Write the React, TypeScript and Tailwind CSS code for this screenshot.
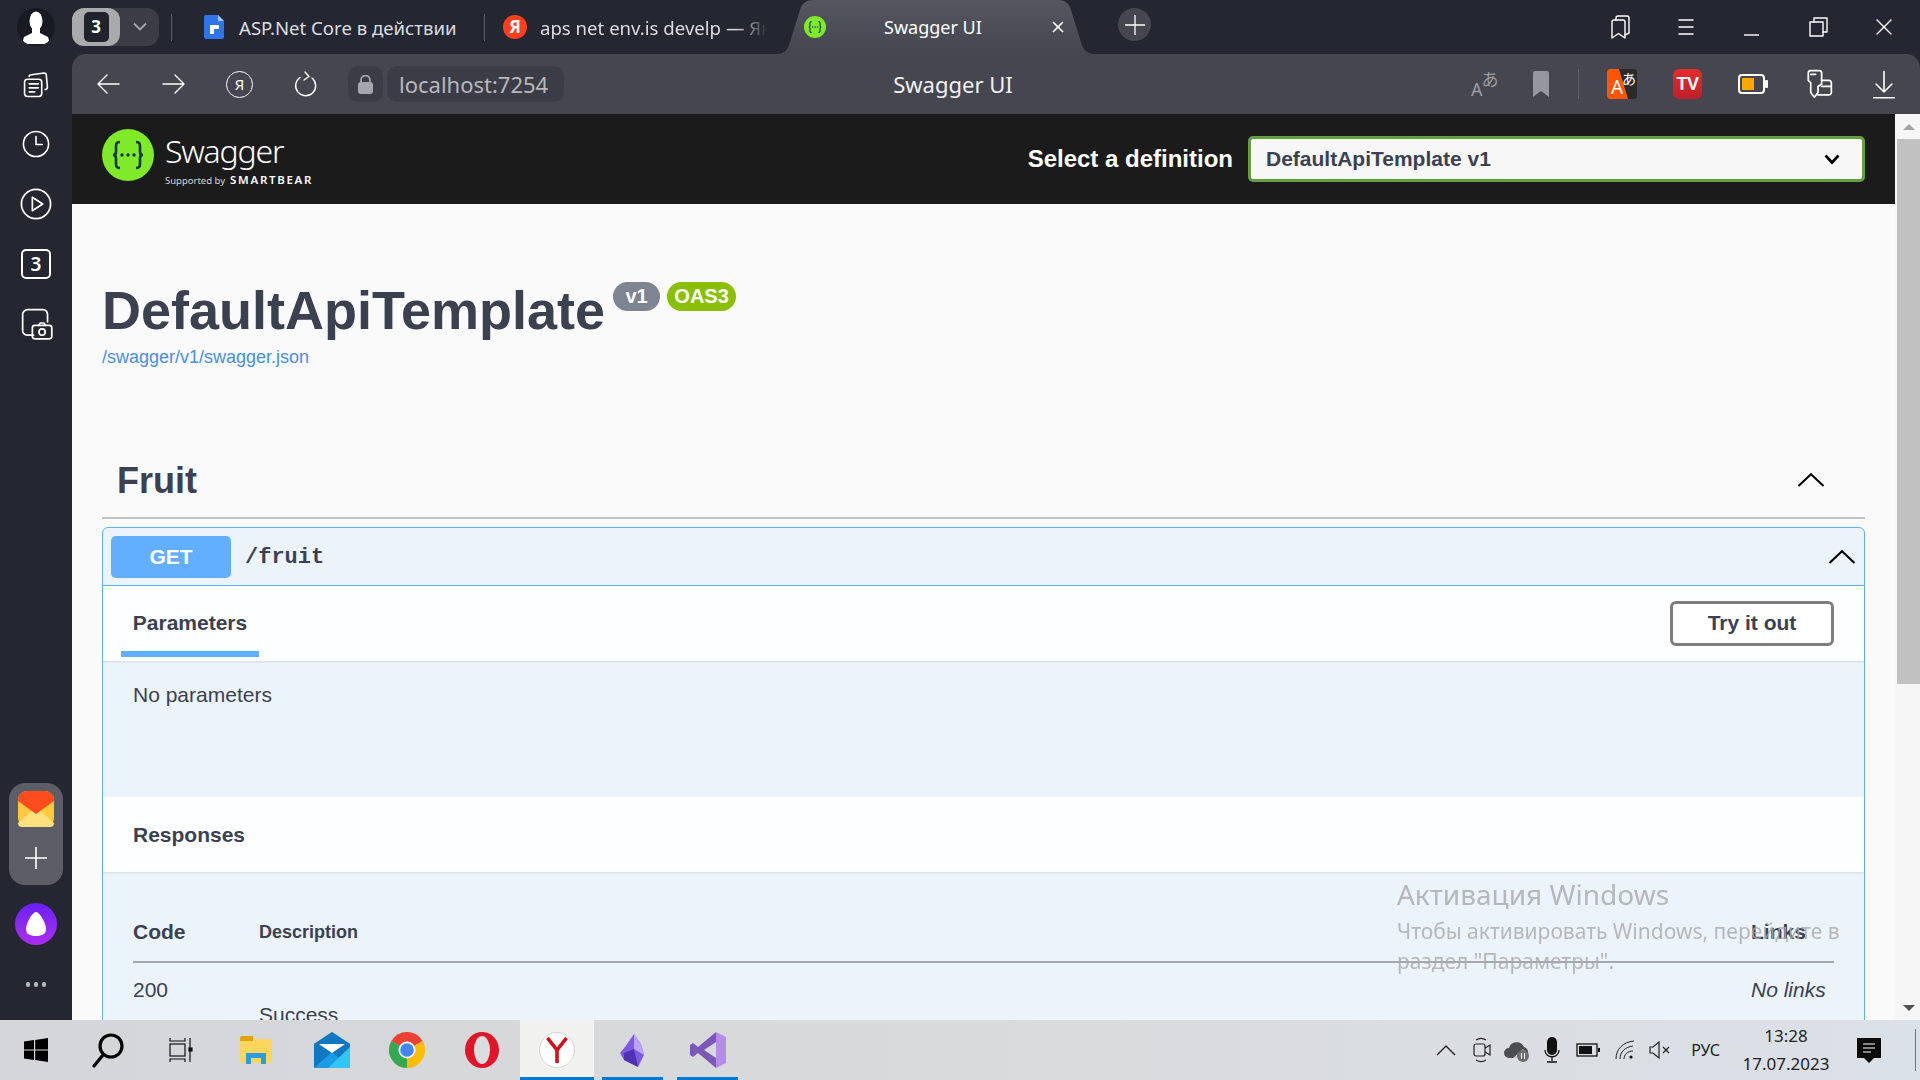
import type { ReactNode } from "react";

const ui = "font-['Noto_Sans','Open_Sans',sans-serif]";

function Icon({ size = 28, children, className = "" }: { size?: number; children: ReactNode; className?: string }) {
  return (
    <svg
      width={size}
      height={size}
      viewBox="0 0 28 28"
      fill="none"
      stroke="currentColor"
      strokeWidth="1.4"
      strokeLinecap="round"
      strokeLinejoin="round"
      className={className}
    >
      {children}
    </svg>
  );
}

function SwaggerMark({ size }: { size: number }) {
  return (
    <svg width={size} height={size} viewBox="0 0 52 52" className="shrink-0">
      <circle cx="26" cy="26" r="26" fill="#7eea2a" />
      <path
        d="M18 13c-4 0-4 2-4 5v5c0 2-1 3-3 3 2 0 3 1 3 3v5c0 3 0 5 4 5M34 13c4 0 4 2 4 5v5c0 2 1 3 3 3-2 0-3 1-3 3v5c0 3 0 5-4 5"
        fill="none"
        stroke="#173647"
        strokeWidth="2.6"
      />
      <circle cx="20" cy="26" r="1.7" fill="#173647" />
      <circle cx="26" cy="26" r="1.7" fill="#173647" />
      <circle cx="32" cy="26" r="1.7" fill="#173647" />
    </svg>
  );
}

function Rail() {
  return (
    <aside className="w-[72px] shrink-0 bg-[#242731] flex flex-col items-center text-white">
      <div className="mt-[8px] w-[38px] h-[38px] rounded-full bg-[#171a22] overflow-hidden flex justify-center">
        <svg width="30" height="38" viewBox="0 0 30 38">
          <ellipse cx="15" cy="13" rx="6.500" ry="9.500" fill="#fff" />
          <path d="M11 20h8v5l8 4c1 2 1 5 1 7H2c0-2 0-5 1-7l8-4z" fill="#fff" />
        </svg>
      </div>
      <Icon size={32} className="mt-[23px]">
        <rect x="4" y="9" width="15" height="15" rx="2.5" />
        <path d="M8 6.500C8 5 9 5 10 5l11-1.500c1 0 2 .5 2 2M23 5l1 11c0 1-1 2-2 2M8 13h8M8 16.500h8M8 20h5" />
      </Icon>
      <Icon size={32} className="mt-[27px]">
        <circle cx="14" cy="14" r="11" />
        <path d="M14 7.500v7h5.500" />
      </Icon>
      <Icon size={34} className="mt-[27px]">
        <circle cx="14" cy="14" r="12" />
        <path d="M11 8.500v11l8.500-5.500z" />
      </Icon>
      <div className="mt-[28px] w-[30px] h-[30px] rounded-[5px] border-2 border-white flex items-center justify-center text-[19px] font-semibold">
        3
      </div>
      <Icon size={34} className="mt-[27px]">
        <path d="M12 24H6.500C5 24 3 22.500 3 20.500V7c0-2 2-4 4-4h13c2 0 3.500 2 3.500 4v6" />
        <rect x="11" y="16" width="16" height="11" rx="2" />
        <path d="M16 16l1.500-2h3l1.500 2" />
        <circle cx="19" cy="21.500" r="2.600" />
      </Icon>
      <div className="mt-auto w-[54px] h-[102px] rounded-[16px] bg-[#5c5d66] flex flex-col items-center pt-[8px]">
        <svg width="36" height="36" viewBox="0 0 36 36">
          <rect width="36" height="36" rx="9" fill="#ffc93c" />
          <path d="M0 32l18-16 18 16v0a4 4 0 0 1-4 4H4a4 4 0 0 1-4-4z" fill="#ffe07c" />
          <path d="M0 9a9 9 0 0 1 9-9h18a9 9 0 0 1 9 9v1L18 23 0 10z" fill="#fc4c1c" />
        </svg>
        <svg width="24" height="24" viewBox="0 0 24 24" className="mt-[19px]" stroke="#fff" strokeWidth="1.6">
          <path d="M12 1v22M1 12h22" />
        </svg>
      </div>
      <div className="mt-[18px] w-[42px] h-[42px] rounded-full bg-gradient-to-b from-[#6a1cf5] to-[#ac2bee] flex items-center justify-center">
        <svg width="22" height="26" viewBox="0 0 22 26">
          <path d="M11 1c4 0 10 12 10 17 0 5-4 7-10 7S1 23 1 18C1 13 7 1 11 1z" fill="#fff" />
        </svg>
      </div>
      <div className="mt-[37px] mb-[33px] flex gap-[4px]">
        <span className="w-[4px] h-[5px] rounded-full bg-[#b9bac0]" />
        <span className="w-[4px] h-[5px] rounded-full bg-[#b9bac0]" />
        <span className="w-[4px] h-[5px] rounded-full bg-[#b9bac0]" />
      </div>
    </aside>
  );
}

function TabStrip() {
  return (
    <div className={`h-[54px] shrink-0 flex items-center text-white ${ui}`}>
      <div className="w-[87px] h-[38px] rounded-[12px] bg-[#3b3c46] flex items-center">
        <div className="w-[48px] h-[38px] rounded-[12px] bg-[#a9aaae] flex items-center justify-center">
          <div className="w-[25px] h-[30px] bg-[#20232c] rounded-[5px] text-[17px] font-bold flex items-center justify-center">3</div>
        </div>
        <svg width="14" height="10" viewBox="0 0 14 10" className="ml-[13px]" fill="none" stroke="#a7a8ae" strokeWidth="1.8">
          <path d="M1 1.500l6 6 6-6" />
        </svg>
      </div>
      <div className="ml-[12px] w-[1px] h-[27px] bg-[#5a5b64]" />
      <svg width="20" height="24" viewBox="0 0 20 24" className="ml-[32px]">
        <path d="M2 0h12l6 6v16a2 2 0 0 1-2 2H2a2 2 0 0 1-2-2V2a2 2 0 0 1 2-2z" fill="#2f74ec" />
        <path d="M14 0l6 6h-6z" fill="#a5c6fa" />
        <path d="M6 10h9v4h-5v5H6z" fill="#fff" />
      </svg>
      <span className="ml-[15px] w-[245px] pt-[1px] text-[18.6px] text-[#dcdde0] whitespace-nowrap">ASP.Net Core в действии</span>
      <div className="w-[1px] h-[27px] bg-[#5a5b64]" />
      <div className="ml-[18px] w-[24px] h-[24px] rounded-full bg-[#fc3f1d] flex items-center justify-center text-[17px] font-bold">Я</div>
      <span className="ml-[13px] w-[228px] pt-[1px] overflow-hidden text-[18.6px] text-[#dcdde0] whitespace-nowrap [mask-image:linear-gradient(to_right,#000_86%,transparent)]">
        aps net env.is develp — Яндекс
      </span>
      <div className="ml-[8px] w-[319px] h-[54px] bg-gradient-to-b from-[#555660] to-[#454650] flex items-center [clip-path:path('M0_54C8_54_12_50_14_42L24_10C26_3_30_0_38_0H281C289_0_293_3_295_10L305_42C307_50_311_54_319_54Z')]">
        <div className="ml-[28px]">
          <SwaggerMark size={22} />
        </div>
        <span className="ml-[58px] w-[168px] pt-[1px] text-[18px] whitespace-nowrap">Swagger UI</span>
        <svg width="12" height="12" viewBox="0 0 12 12" stroke="#fff" strokeWidth="1.7">
          <path d="M1 1l10 10M11 1L1 11" />
        </svg>
      </div>
      <div className="ml-[23px] w-[33px] h-[33px] -mt-[5px] rounded-full bg-[#454650] flex items-center justify-center">
        <svg width="20" height="20" viewBox="0 0 20 20" stroke="#fff" strokeWidth="1.3">
          <path d="M10 0v20M0 10h20" />
        </svg>
      </div>
      <div className="ml-auto flex items-center gap-[38px] pr-[22px]">
        <Icon>
          <path d="M6 25V9c0-1 1-2 2-2h9c1 0 2 1 2 2v16l-6.500-4.500z" />
          <path d="M10 7V5c0-1 1-2 2-2h9c1 0 2 1 2 2v15l-4 2" />
        </Icon>
        <Icon>
          <path d="M7 7h14M7 14h14M7 21h14" />
        </Icon>
        <Icon>
          <path d="M6 22h15" strokeLinecap="butt" />
        </Icon>
        <Icon>
          <rect x="6" y="9" width="13" height="14" />
          <path d="M10 9V5h13v14h-4" />
        </Icon>
        <Icon>
          <path d="M7 7l14 14M21 7L7 21" />
        </Icon>
      </div>
    </div>
  );
}

function Toolbar() {
  return (
    <div className={`h-[60px] shrink-0 rounded-t-[14px] bg-[#454650] flex items-center text-white ${ui}`}>
      <div className="ml-[22px] flex items-center gap-[38px]">
        <Icon>
          <path d="M25 14H4M13 5l-9 9 9 9" />
        </Icon>
        <Icon>
          <path d="M3 14h21M15 5l9 9-9 9" />
        </Icon>
        <div className="w-[27px] h-[27px] rounded-full border border-white flex items-center justify-center text-[15px]">Я</div>
        <Icon>
          <path d="M21 8a10 10 0 1 1-12-.500M14 2l4 4.500-5 3.500" />
        </Icon>
      </div>
      <div className="ml-[29px] w-[35px] h-[36px] rounded-[10px] bg-[#3b3c46] flex items-center justify-center">
        <svg width="15" height="19" viewBox="0 0 15 19" fill="#a5a6ac">
          <rect y="7" width="15" height="12" rx="3" />
          <path d="M3 8V5a4.500 4.500 0 0 1 9 0v3" fill="none" stroke="#a5a6ac" strokeWidth="1.8" />
        </svg>
      </div>
      <div className="ml-[4px] w-[177px] h-[36px] rounded-[10px] bg-[#3b3c46] pl-[12px] text-[#b7b8bc] text-[22px] leading-[36px] whitespace-nowrap">
        localhost:7254
      </div>
      <div className="w-[778px] text-center text-[22px] text-[#f2f2f3]">Swagger UI</div>
      <div className="ml-auto pr-[20px] flex items-center">
        <span className="flex items-start w-[30px] h-[32px] text-[#9c9da3]">
          <span className="mt-[11px] text-[18px] leading-[21px]">A</span>
          <span className="-ml-[1px] text-[17px] leading-[21px] font-['Noto_Sans_CJK_JP',sans-serif]">あ</span>
        </span>
        <svg width="16" height="26" viewBox="0 0 16 26" className="ml-[32px]">
          <path d="M0 2a2 2 0 0 1 2-2h12a2 2 0 0 1 2 2v24l-8-6-8 6z" fill="#96979d" />
        </svg>
        <div className="ml-[29px] w-[1px] h-[30px] bg-[#5f606a]" />
        <div className="ml-[28px] w-[30px] h-[30px] rounded-[3px] overflow-hidden bg-[#2a2a2a] relative">
          <div className="absolute inset-0 bg-[#ff5400] [clip-path:polygon(0_0,40%_0,70%_100%,0_100%)]" />
          <span className="absolute left-[4px] bottom-0 text-[19px] leading-[24px]">A</span>
          <span className="absolute right-[1px] top-0 text-[14px] leading-[18px] font-['Noto_Sans_CJK_JP',sans-serif]">あ</span>
        </div>
        <div className="ml-[36px] w-[29px] h-[30px] rounded-[6px] bg-gradient-to-b from-[#e52d2b] to-[#bf1f2a] flex items-center justify-center text-[18px] font-black tracking-[-0.5px] font-['Liberation_Sans',sans-serif]">
          TV
        </div>
        <svg width="30" height="20" viewBox="0 0 30 20" className="ml-[36px]">
          <rect x="1" y="1" width="25" height="18" rx="3" fill="none" stroke="#fff" strokeWidth="2" />
          <rect x="4" y="4" width="12" height="12" fill="#ffa800" />
          <rect x="27" y="6" width="3" height="8" rx="1" fill="#fff" />
        </svg>
        <Icon size={34} className="ml-[33px]">
          <path d="M6 5a2 2 0 0 1 2-2h7a2 2 0 0 1 2 2v9l-3 2v5l-3 4-3-4V13l-2-2z" />
          <path d="M8 6h4" />
          <path d="M17 11h6c1 0 2 1 2 2v8c0 1-1 2-2 2h-9M17 16h8" />
        </Icon>
        <Icon size={32} className="ml-[33px]">
          <path d="M14 3v18M7 14l7 7 7-7M5 26h18" />
        </Icon>
      </div>
    </div>
  );
}

function Chevron({ className = "" }: { className?: string }) {
  return (
    <svg width="26" height="14" viewBox="0 0 26 14" fill="none" stroke="#000" strokeWidth="2" className={className}>
      <path d="M0.500 13L13 1.200 25.500 13" />
    </svg>
  );
}

function SwaggerPage() {
  return (
    <div className="flex-1 min-w-0 bg-[#fafafa] font-['Liberation_Sans',Arial,sans-serif] text-[#3b4151]">
      <header className="h-[90px] bg-[#1b1b1b] pl-[30px] pr-[30px] flex items-center">
        <div className="mt-[-8px]">
          <SwaggerMark size={52} />
        </div>
        <div className="ml-[11px] text-white">
          <div className={`text-[32px] leading-[38px] tracking-[-1.2px] font-light mt-[2px] ${ui}`}>Swagger</div>
          <div className={`flex items-baseline text-[9.5px] leading-[14px] mt-[3px] text-[#d8d8d8] ${ui}`}>
            Supported by
            <span className="ml-[5px] text-[11.5px] font-semibold tracking-[1.7px] text-white">SMARTBEAR</span>
          </div>
        </div>
        <span className="ml-auto text-[24px] font-bold text-white whitespace-nowrap">Select a definition</span>
        <div className="ml-[15px] w-[617px] h-[46px] border-[3px] border-[#62a03f] rounded-[5px] bg-[#f7f7f7] pl-[15px] pr-[22px] flex items-center justify-between">
          <span className="text-[21px] font-bold">DefaultApiTemplate v1</span>
          <svg width="16" height="11" viewBox="0 0 16 11" fill="none" stroke="#000" strokeWidth="2.600">
            <path d="M1.500 1.500L8 8.500l6.500-7" />
          </svg>
        </div>
      </header>

      <div className="px-[30px]">
        <section className="h-[246px] pt-[75px]">
          <div className="flex items-start">
            <h1 className="text-[54px] leading-[62px] font-bold whitespace-nowrap">DefaultApiTemplate</h1>
            <span className="ml-[8px] mt-[3px] w-[47px] h-[29px] rounded-[15px] bg-[#7d8492] text-white text-[20px] font-bold leading-[29px] text-center">v1</span>
            <span className="ml-[7px] mt-[3px] w-[69px] h-[29px] rounded-[15px] bg-[#89bf04] text-white text-[20px] font-bold leading-[29px] text-center">OAS3</span>
          </div>
          <a className="block mt-[4px] text-[18px] leading-[24px] text-[#4990e2]">/swagger/v1/swagger.json</a>
        </section>

        <div className="h-[69px] border-b-2 border-[#c4c4c4] flex items-center justify-between pl-[15px] pr-[41px]">
          <h2 className="text-[36px] font-bold leading-[44px] mt-[-6px]">Fruit</h2>
          <Chevron className="mt-[-8px]" />
        </div>

        <div className="mt-[8px] border border-[#61affe] rounded-[6px] bg-[#ebf3fb]">
          <div className="h-[58px] border-b border-[#61affe] flex items-center pl-[8px] pr-[9px]">
            <div className="w-[120px] h-[42px] rounded-[5px] bg-[#61affe] text-white text-[21px] font-bold flex items-center justify-center">GET</div>
            <span className="ml-[14px] pt-[1px] text-[22px] font-bold font-['Liberation_Mono',monospace]">/fruit</span>
            <Chevron className="ml-auto" />
          </div>

          <div className="h-[75px] bg-[#fdfeff] shadow-[0_1px_2px_rgba(0,0,0,0.1)] flex pl-[18px] pr-[30px] relative">
            <div className="w-[138px] h-[71px] pt-[8px] border-b-[6px] border-[#61affe] text-[21px] font-bold flex items-center justify-center">Parameters</div>
            <button className="ml-auto mt-[15px] w-[164px] h-[45px] pb-[2px] rounded-[6px] border-[3px] border-[#7d7d7d] bg-white text-[21px] font-bold">Try it out</button>
          </div>

          <div className="h-[136px] pl-[30px] pt-[21px] text-[21px] leading-[26px]">No parameters</div>

          <div className="h-[75px] bg-[#fdfeff] shadow-[0_1px_2px_rgba(0,0,0,0.1)] pl-[30px] flex items-center text-[21px] font-bold">Responses</div>

          <div className="pl-[30px] pr-[30px] pt-[42px]">
            <div className="grid grid-cols-[126px_1fr_83px] h-[49px] border-b-2 border-[#a4a8b0] font-bold">
              <span className="text-[21px] leading-[36px]">Code</span>
              <span className="text-[18px] leading-[36px]">Description</span>
              <span className="text-[21px] leading-[36px]">Links</span>
            </div>
            <div className="grid grid-cols-[126px_1fr_83px] pt-[14px]">
              <span className="text-[21px] leading-[26px]">200</span>
              <span className="text-[21px] leading-[26px] pt-[25px]">Success</span>
              <span className="text-[21px] leading-[26px] italic">No links</span>
            </div>
          </div>
        </div>
      </div>
    </div>
  );
}

function Scrollbar() {
  return (
    <div className="w-[25px] shrink-0 bg-[#f6f6f6] flex flex-col items-end">
      <div className="w-[23px] h-[25px] flex items-center justify-center">
        <div className="w-0 h-0 border-x-[6px] border-x-transparent border-b-[6px] border-b-[#a3a3a3]" />
      </div>
      <div className="w-[23px] h-[545px] bg-[#c1c1c1]" />
      <div className="mt-auto w-[23px] h-[25px] flex items-center justify-center">
        <div className="w-0 h-0 border-x-[6px] border-x-transparent border-t-[6px] border-t-[#505050]" />
      </div>
    </div>
  );
}

function Taskbar() {
  return (
    <footer className={`h-[60px] shrink-0 bg-gradient-to-r from-[#d5d6d9] via-[#d9dadb] to-[#dbe1e8] flex items-stretch text-[#111] ${ui}`}>
      <div className="w-[72px] flex items-center justify-center">
        <svg width="24" height="24" viewBox="0 0 24 24" fill="#000">
          <path d="M0 3.500l10-1.400V11.400H0zM11.200 2l12.800-2v11.400H11.200zM0 12.600h10v9.300l-10-1.400zM11.200 12.600H24V24l-12.800-2z" />
        </svg>
      </div>
      <div className="w-[72px] flex items-center justify-center">
        <svg width="34" height="36" viewBox="0 0 34 36" fill="none" stroke="#000" strokeWidth="3.200" strokeLinecap="round">
          <circle cx="20" cy="14" r="11" />
          <path d="M12 23L3 34" />
        </svg>
      </div>
      <div className="w-[74px] flex items-center justify-center">
        <svg width="24" height="24" viewBox="0 0 24 24" fill="none" stroke="#111" strokeWidth="1.200">
          <path d="M1 0v3h15V0M1 24v-3h15v3M21 0v24" />
          <rect x="1" y="6" width="15" height="12" />
          <rect x="20" y="10" width="3" height="3" fill="#111" />
        </svg>
      </div>
      <div className="w-[76px] flex items-center justify-center">
        <svg width="32" height="28" viewBox="0 0 32 28">
          <path d="M0 2a2 2 0 0 1 2-2h9l3 3h16a2 2 0 0 1 2 2v20a2 2 0 0 1-2 2H2a2 2 0 0 1-2-2z" fill="#ffd65c" />
          <path d="M0 2a2 2 0 0 1 2-2h11v5H0z" fill="#e3a20f" />
          <path d="M6 28V17h20v11h-5v-6H11v6z" fill="#2e9ce0" />
        </svg>
      </div>
      <div className="w-[76px] flex items-center justify-center">
        <svg width="36" height="36" viewBox="0 0 36 36">
          <path d="M18 0L36 12v24H0V12z" fill="#1b9be6" />
          <path d="M18 0L36 12v24L18 20 0 36V12z" fill="#0a64b0" opacity="0.65" />
          <path d="M5 12h26L18 21z" fill="#fff" />
          <path d="M36 15v21H14z" fill="#32c6f4" />
        </svg>
      </div>
      <div className="w-[74px] flex items-center justify-center">
        <svg width="36" height="36" viewBox="0 0 36 36">
          <path d="M18 18L33.600 9A18 18 0 0 0 2.400 9z" fill="#ea4335" />
          <path d="M18 18L2.400 9A18 18 0 0 0 18 36z" fill="#34a853" />
          <path d="M18 18L18 36A18 18 0 0 0 33.600 9z" fill="#fbbc05" />
          <circle cx="18" cy="18" r="8.500" fill="#fff" />
          <circle cx="18" cy="18" r="6.800" fill="#4285f4" />
        </svg>
      </div>
      <div className="w-[76px] flex items-center justify-center">
        <svg width="36" height="36" viewBox="0 0 36 36">
          <ellipse cx="18" cy="18" rx="17" ry="18" fill="#e0152a" />
          <ellipse cx="18" cy="18" rx="8" ry="14" fill="#dcdddf" />
        </svg>
      </div>
      <div className="w-[74px] bg-[#f1f1f0] border-b-[3px] border-[#0078d4] flex items-center justify-center pt-[3px]">
        <div className="w-[36px] h-[36px] rounded-full bg-white border border-[#d5d5d5] flex items-center justify-center">
          <svg width="22" height="26" viewBox="0 0 22 26" fill="none" stroke="#d50f1c" strokeWidth="3.600">
            <path d="M1.500 1l9.500 12 9.500-12M11 13v13" />
          </svg>
        </div>
      </div>
      <div className="ml-[8px] w-[61px] border-b-[3px] border-[#0078d4] flex items-center justify-center pt-[3px]">
        <svg width="26" height="33" viewBox="0 0 26 33">
          <path d="M14 0l7 10 3 11-6 12L4 26 0 19l5-6z" fill="#7c5be0" />
          <path d="M14 0l7 10 3 11-10-6z" fill="#b9a3f5" />
          <path d="M4 19l10-4 4 18-14-7z" fill="#4f32b3" />
        </svg>
      </div>
      <div className="ml-[14px] w-[61px] border-b-[3px] border-[#0078d4] flex items-center justify-center pt-[3px]">
        <svg width="36" height="36" viewBox="0 0 36 36">
          <path d="M26 0L36 5V31L26 36z" fill="#b68ce9" />
          <path d="M26 0L8 15 3 11 0 13v10l3 2 5-4 18 15V26L14 18 26 10z" fill="#7c57b8" />
        </svg>
      </div>

      <div className="ml-auto flex items-center text-[#1c1c1c]">
        <svg width="20" height="12" viewBox="0 0 20 12" fill="none" stroke="#222" strokeWidth="1.400">
          <path d="M1 11L10 2l9 9" />
        </svg>
        <svg width="18" height="26" viewBox="0 0 18 26" className="ml-[17px]" fill="none" stroke="#222" strokeWidth="1.200">
          <rect x="1" y="7" width="11" height="12" rx="2" />
          <path d="M12 11l5-3v10l-5-3M3 3c3-2 7-2 10 0M3 23c3 2 7 2 10 0" />
        </svg>
        <svg width="26" height="24" viewBox="0 0 26 24" className="ml-[13px]">
          <path d="M5 20a5 5 0 0 1 0-10 8 8 0 0 1 15-1 6 6 0 0 1 1 11z" fill="#4b4d50" />
          <path d="M9 20l10-9 4 4-2 5z" fill="#c4c6c9" />
          <circle cx="19" cy="18" r="6" fill="#6d6e70" />
          <path d="M17.500 15v6M20.500 15v6" stroke="#fff" strokeWidth="1" />
        </svg>
        <svg width="16" height="26" viewBox="0 0 16 26" className="ml-[14px]">
          <rect x="3" y="0" width="10" height="18" rx="5" fill="#111" />
          <path d="M1 13c0 9 14 9 14 0M8 20v4M3 25h10" fill="none" stroke="#111" strokeWidth="1.300" />
        </svg>
        <svg width="24" height="14" viewBox="0 0 24 14" className="ml-[16px]">
          <rect x="1" y="1" width="20" height="12" fill="none" stroke="#111" strokeWidth="1.300" />
          <rect x="3" y="3" width="13" height="8" fill="#111" />
          <rect x="22" y="5" width="2" height="4" fill="#111" />
        </svg>
        <svg width="20" height="20" viewBox="0 0 20 20" className="ml-[15px]" fill="none" stroke="#222" strokeWidth="1">
          <path d="M1 19C1 9 8 2 19 1M5 19c0-7 5-12 13-13M9 19c0-4 3-8 9-8" />
          <circle cx="16" cy="17" r="1.600" fill="#111" stroke="none" />
        </svg>
        <svg width="22" height="22" viewBox="0 0 22 22" className="ml-[14px]" fill="none" stroke="#222" strokeWidth="1.200">
          <path d="M1 8h3l6-5v16l-6-5H1zM14 8l6 6M20 8l-6 6" />
        </svg>
        <span className="ml-[20px] text-[16px] text-[#222]">РУС</span>
        <div className="ml-[21px] w-[90px] text-center text-[17px] leading-[28px] text-[#222] whitespace-nowrap">
          <div>13:28</div>
          <div>17.07.2023</div>
        </div>
        <div className="ml-[26px] mr-[34px]">
          <svg width="24" height="25" viewBox="0 0 24 25">
            <path d="M0 0h24v20h-7l-5 5-5-5H0z" fill="#0b0b0b" />
            <path d="M6 6h12M6 10h12M6 14h8" stroke="#fff" strokeWidth="1" />
          </svg>
        </div>
        <div className="w-[1px] h-[42px] bg-[#777] mr-[4px]" />
      </div>
    </footer>
  );
}

export default function App() {
  return (
    <div className="w-[1920px] h-[1080px] overflow-hidden flex flex-col relative bg-[#242731]">
      <div className="flex-1 min-h-0 flex">
        <Rail />
        <div className="flex-1 min-w-0 flex flex-col">
          <TabStrip />
          <Toolbar />
          <div className="flex-1 min-h-0 flex overflow-hidden">
            <SwaggerPage />
            <Scrollbar />
          </div>
        </div>
      </div>
      <Taskbar />

      <div className={`absolute left-[1397px] top-[875px] text-[#a9a9a9] opacity-80 pointer-events-none ${ui}`}>
        <div className="text-[28px] leading-[38px] mb-[3px]">Активация Windows</div>
        <div className="text-[21px] leading-[30px] whitespace-nowrap">Чтобы активировать Windows, перейдите в</div>
        <div className="text-[21px] leading-[30px]">раздел "Параметры".</div>
      </div>
    </div>
  );
}
